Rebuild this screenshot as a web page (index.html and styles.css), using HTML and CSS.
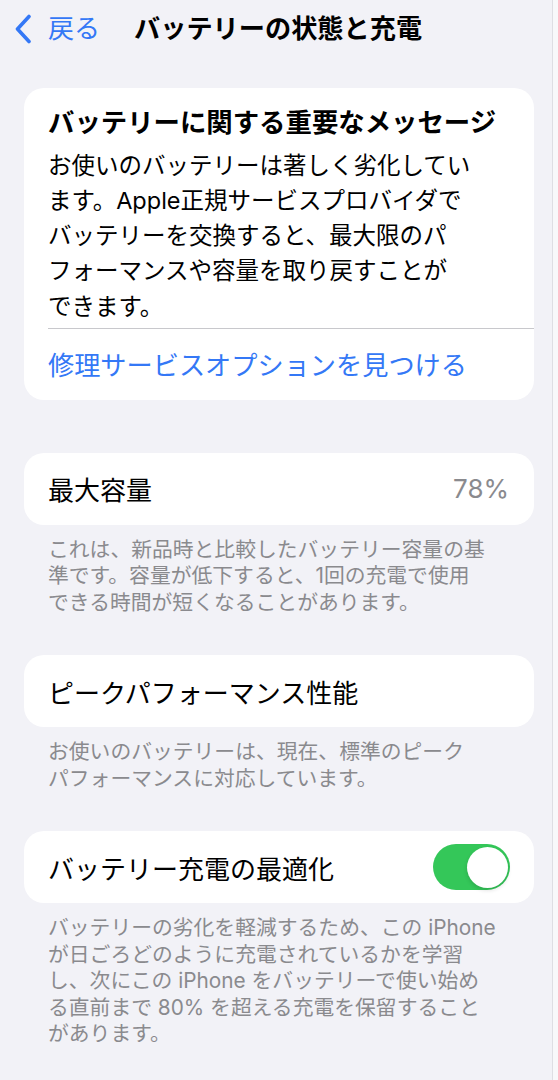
FILE: index.html
```html
<!DOCTYPE html>
<html lang="ja">
<head>
<meta charset="utf-8">
<title>バッテリーの状態と充電</title>
<link rel="stylesheet" href="styles.css">
</head>
<body>
<div class="page">
  <header class="nav">
    <svg class="chev" width="18" height="30" viewBox="0 0 18 30" aria-hidden="true">
      <path d="M15 2.5 L3.5 15 L15 27.5" fill="none" stroke="#3478f6" stroke-width="3.6" stroke-linecap="round" stroke-linejoin="round"/>
    </svg>
    <span class="back">戻る</span>
    <h1 class="title">バッテリーの状態と充電</h1>
  </header>

  <main class="content">
    <section class="card msg">
      <h2 class="msg-title">バッテリーに関する重要なメッセージ</h2>
      <p class="msg-body">お使いのバッテリーは著しく劣化してい<br>ます。Apple正規サービスプロバイダで<br>バッテリーを交換すると、最大限のパ<br>フォーマンスや容量を取り戻すことが<br>できます。</p>
      <div class="sep"></div>
      <div class="link-row">修理サービスオプションを見つける</div>
    </section>

    <section class="card row cap">
      <span class="label">最大容量</span>
      <span class="value">78%</span>
    </section>
    <p class="footer">これは、新品時と比較したバッテリー容量の基<br>準です。容量が低下すると、1回の充電で使用<br>できる時間が短くなることがあります。</p>

    <section class="card row">
      <span class="label">ピークパフォーマンス性能</span>
    </section>
    <p class="footer">お使いのバッテリーは、現在、標準のピーク<br>パフォーマンスに対応しています。</p>

    <section class="card row tog-row">
      <span class="label">バッテリー充電の最適化</span>
      <span class="toggle"><span class="knob"></span></span>
    </section>
    <p class="footer">バッテリーの劣化を軽減するため、この iPhone<br>が日ごろどのように充電されているかを学習<br>し、次にこの iPhone をバッテリーで使い始め<br>る直前まで 80% を超える充電を保留すること<br>があります。</p>
  </main>
</div>
</body>
</html>
```

FILE: styles.css
```css
html {
  background: #f8f8fa;
}
body {
  margin: 0;
  font-family: "Inter", "Noto Sans CJK JP", sans-serif;
  color: #000;
}
.page {
  width: 553px;
  min-height: 1080px;
  background: #f2f2f7;
  border-right: 1px solid #dedee3;
  box-sizing: border-box;
}
.nav {
  height: 58px;
  display: flex;
  align-items: center;
  padding-left: 14px;
}
.chev {
  display: block;
  margin-right: 16px;
  flex: none;
}
.back {
  font-size: 26px;
  color: #3478f6;
  margin-right: 34px;
  line-height: 1;
}
.title {
  margin: 0;
  font-size: 26.2px;
  font-weight: 600;
  line-height: 1;
}
.content {
  padding: 30px 18px 0 24px;
}
.card {
  background: #fff;
  border-radius: 20px;
}
.msg {
  padding-top: 16px;
}
.msg-title {
  margin: 0;
  padding: 0 24px;
  font-size: 26.4px;
  font-weight: 600;
  line-height: 36px;
}
.msg-body {
  margin: 7.5px 0 4px;
  padding: 0 24px;
  font-size: 23.5px;
  line-height: 35.3px;
}
.sep {
  margin-left: 24px;
  height: 1px;
  background: #c8c8cc;
}
.link-row {
  height: 71px;
  display: flex;
  align-items: center;
  padding: 0 24px;
  font-size: 26.2px;
  color: #3478f6;
}
.row {
  height: 72px;
  display: flex;
  align-items: center;
  justify-content: space-between;
  padding: 0 25px 0 24px;
  font-size: 26px;
}
.cap {
  margin-top: 53px;
}
.value {
  color: #8a8a8e;
}
.footer {
  margin: 11.7px 0 39px;
  padding-left: 24px;
  font-size: 20.8px;
  line-height: 26.6px;
  color: #8a8a8e;
}
.tog-row {
  padding-right: 24px;
}
.toggle {
  width: 77px;
  height: 46px;
  border-radius: 23px;
  background: #34c759;
  display: flex;
  align-items: center;
  justify-content: flex-end;
  padding: 0 2.5px;
  box-sizing: border-box;
}
.knob {
  width: 41px;
  height: 41px;
  border-radius: 50%;
  background: #fff;
  box-shadow: 0 2px 4px rgba(0,0,0,0.15);
}
```
